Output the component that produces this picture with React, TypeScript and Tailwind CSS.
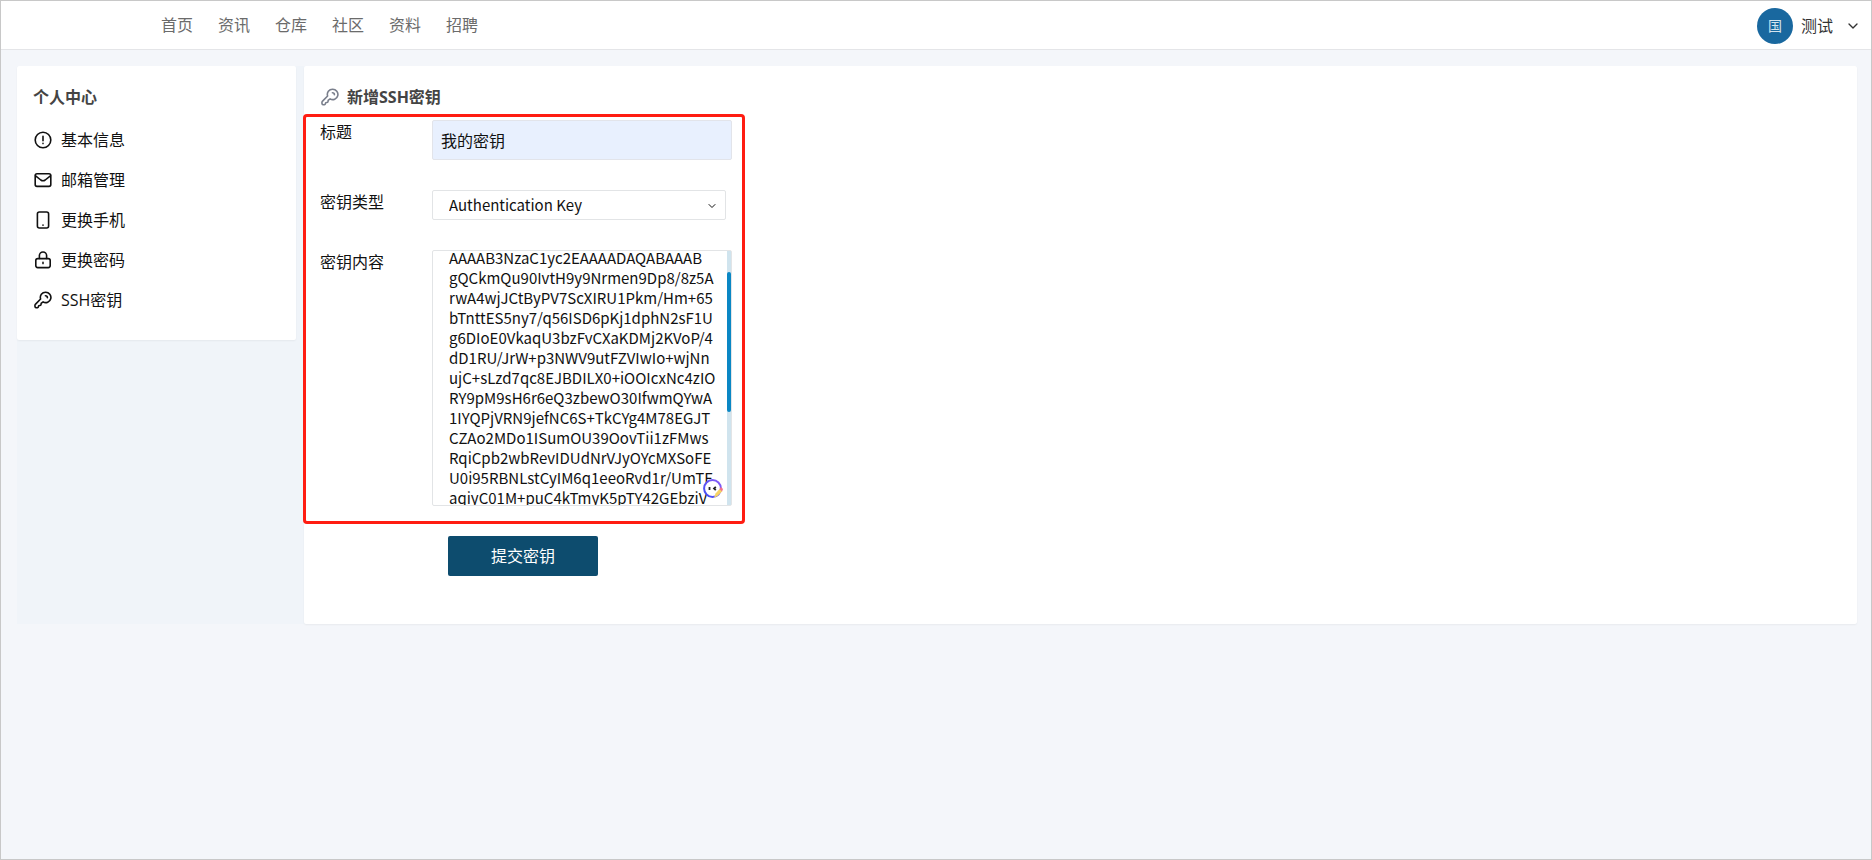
import React, { useEffect, useRef, useState } from "react";
import { ChevronDown } from "lucide-react";

const navItems = ["首页", "资讯", "仓库", "社区", "资料", "招聘"];

const keyContent = [
  "AAAAB3NzaC1yc2EAAAADAQABAAAB",
  "gQCkmQu90IvtH9y9Nrmen9Dp8/8z5A",
  "rwA4wjJCtByPV7ScXIRU1Pkm/Hm+65",
  "bTnttES5ny7/q56ISD6pKj1dphN2sF1U",
  "g6DIoE0VkaqU3bzFvCXaKDMj2KVoP/4",
  "dD1RU/JrW+p3NWV9utFZVIwIo+wjNn",
  "ujC+sLzd7qc8EJBDILX0+iOOIcxNc4zIO",
  "RY9pM9sH6r6eQ3zbewO30IfwmQYwA",
  "1IYQPjVRN9jefNC6S+TkCYg4M78EGJT",
  "CZAo2MDo1ISumOU39OovTii1zFMws",
  "RqiCpb2wbRevIDUdNrVJyOYcMXSoFE",
  "U0i95RBNLstCyIM6q1eeoRvd1r/UmTE",
  "aqiyC01M+puC4kTmyK5pTY42GEbziV",
].join("\n");

interface IconProps {
  className?: string;
  children: React.ReactNode;
}

const Icon: React.FC<IconProps> = ({ className = "", children }) => (
  <svg
    viewBox="0 0 18 18"
    fill="none"
    stroke="currentColor"
    strokeWidth="1.6"
    strokeLinecap="round"
    strokeLinejoin="round"
    className={`size-[18px] shrink-0 ${className}`}
    aria-hidden="true"
  >
    {children}
  </svg>
);

const KeyIcon: React.FC<{ className?: string }> = ({ className }) => (
  <Icon className={className}>
    <path d="M11.6 1.2a5.2 5.2 0 0 0-5 6.8l-5 5.1c-.6.7-.7 2.3-.4 3 .3.7 1.8.9 2.6.5.8-.4.5-1.5 1.1-1.9.6-.4 1.5 0 1.9-.6.4-.6.1-1.5.6-2l1.7-1.2a5.2 5.2 0 1 0 2.5-9.7z" />
    <path d="M11.4 4.8a2 2 0 0 1 2 2" />
  </Icon>
);

const menuItems = [
  {
    label: "基本信息",
    icon: (
      <Icon>
        <circle cx="9" cy="9" r="7.8" />
        <path d="M9 5.2v4.6M9 12.4v.2" />
      </Icon>
    ),
  },
  {
    label: "邮箱管理",
    icon: (
      <Icon>
        <rect x="1.2" y="2.8" width="15.6" height="12.6" rx="1.8" />
        <path d="M1.6 4.8 6.8 9q2.2 1.6 4.4 0l5.2-4.2" />
      </Icon>
    ),
  },
  {
    label: "更换手机",
    icon: (
      <Icon>
        <rect x="3.4" y="1" width="11.2" height="16" rx="2" />
        <path d="M9 14v.2" />
      </Icon>
    ),
  },
  {
    label: "更换密码",
    icon: (
      <Icon>
        <rect x="1.8" y="7.6" width="14.4" height="9" rx="2" />
        <path d="M5.4 7.4V4.6a3.6 3.6 0 0 1 7.2 0v2.8M9 11.4v1.2" />
      </Icon>
    ),
  },
  { label: "SSH密钥", icon: <KeyIcon /> },
];

const Header = () => (
  <header className="flex h-[49px] items-center justify-between border-b border-[#e4e5e8] bg-white pr-2.5 pl-40">
    <nav className="flex gap-[25px] text-[#6b6b6b]">
      {navItems.map((item) => (
        <a key={item} href="#">
          {item}
        </a>
      ))}
    </nav>
    <button type="button" className="flex items-center pt-0.5 text-[#333]">
      <span className="flex size-9 items-center justify-center rounded-full bg-[#19689f] text-sm text-[#d5e4ee]">
        国
      </span>
      <span className="ml-2">测试</span>
      <ChevronDown size={16} strokeWidth={2} className="ml-3" />
    </button>
  </header>
);

const Sidebar = () => (
  <aside className="w-[279px] shrink-0 self-start rounded-xs bg-white px-4 pt-4 pb-5 shadow-xs">
    <h2 className="text-base leading-[30px] font-bold text-[#444]">个人中心</h2>
    <ul className="mt-2">
      {menuItems.map(({ label, icon }) => (
        <li key={label}>
          <a href="#" className="flex h-10 items-center gap-[9px] px-px text-[#111]">
            {icon}
            {label}
          </a>
        </li>
      ))}
    </ul>
  </aside>
);

const AssistantBadge = () => (
  <svg viewBox="0 0 20 20" className="absolute right-2 bottom-1.5 size-5" aria-hidden="true">
    <defs>
      <linearGradient id="ring" x1="0" y1="1" x2="1" y2="0">
        <stop offset="0" stopColor="#3d4df5" />
        <stop offset="1" stopColor="#8a5cf6" />
      </linearGradient>
    </defs>
    <circle cx="9.5" cy="9.5" r="8.4" fill="#fff" stroke="url(#ring)" strokeWidth="2" />
    <path d="M6.5 8v3M12.8 7.8 11 9.5l1.8 1.7" stroke="#222" strokeWidth="1.8" fill="none" />
    <path d="m11 19 1.5-4.5L17 9.5l2.5 2.5-5 5z" fill="#f6d365" />
    <path d="m16.5 10 1.5-2 2 2-1 2.5z" fill="#f4718b" />
  </svg>
);

const KeyForm = () => {
  const [title, setTitle] = useState("我的密钥");
  const [content, setContent] = useState(keyContent);
  const contentRef = useRef<HTMLTextAreaElement>(null);

  // Keep the key slightly scrolled so the last line stays in reach
  useEffect(() => {
    if (contentRef.current) {
      contentRef.current.scrollTop = 3;
    }
  }, []);

  return (
    <main className="min-w-0 flex-1 rounded-xs bg-white pt-4 pb-12 shadow-xs">
      <h1 className="mb-0.5 flex items-center gap-2 pl-[17px] text-base leading-[30px] font-bold text-[#444]">
        <KeyIcon className="text-[#7a7f8c]" />
        新增SSH密钥
      </h1>
      <form onSubmit={(e) => e.preventDefault()}>
        <div className="-ml-px w-[442px] rounded-sm border-3 border-[#ff1d12] pt-[3px] pr-2.5 pb-[15px] pl-3.5">
          <div className="flex">
            <label htmlFor="title" className="w-28 leading-6">
              标题
            </label>
            <input
              id="title"
              value={title}
              onChange={(e) => setTitle(e.target.value)}
              className="h-10 w-[300px] rounded-xs border border-[#e2e4ea] bg-[#e8f0fe] px-2"
            />
          </div>
          <div className="mt-[30px] flex">
            <label htmlFor="type" className="w-28 leading-6">
              密钥类型
            </label>
            <div className="relative w-[294px]">
              <select
                id="type"
                className="h-[30px] w-full appearance-none rounded-xs border border-[#e2e4e6] bg-white px-4 font-['Noto_Sans_CJK_SC',sans-serif] text-[15px] leading-5"
              >
                <option>Authentication Key</option>
              </select>
              <ChevronDown
                size={12}
                strokeWidth={2}
                className="pointer-events-none absolute top-2.5 right-2"
              />
            </div>
          </div>
          <div className="mt-[30px] flex">
            <label htmlFor="content" className="w-28 leading-6">
              密钥内容
            </label>
            <div className="relative flex h-64 w-[300px] rounded-xs border border-[#e2e4e6]">
              <textarea
                id="content"
                ref={contentRef}
                value={content}
                onChange={(e) => setContent(e.target.value)}
                spellCheck={false}
                className="min-w-0 flex-1 resize-none overflow-hidden pl-4 font-['Noto_Sans_CJK_SC',sans-serif] text-[15px] leading-5 whitespace-pre"
              />
              <div className="w-1 bg-[#d0e4ee] pt-[21px]">
                <div className="h-[140px] rounded-xs bg-[#0a87c4]" />
              </div>
              <AssistantBadge />
            </div>
          </div>
        </div>
        <button
          type="submit"
          className="mt-3 ml-36 h-10 w-[150px] rounded-xs bg-[#0d4c6e] text-white"
        >
          提交密钥
        </button>
      </form>
    </main>
  );
};

export default function App() {
  return (
    <div className="min-h-screen border border-[#c8c8c8] bg-[#f4f6fa] font-['Open_Sans','Noto_Sans_CJK_SC',sans-serif] text-base text-[#111]">
      <Header />
      <div className="mt-4 mr-3.5 ml-4 flex gap-2 bg-[#f0f4f9]">
        <Sidebar />
        <KeyForm />
      </div>
    </div>
  );
}
